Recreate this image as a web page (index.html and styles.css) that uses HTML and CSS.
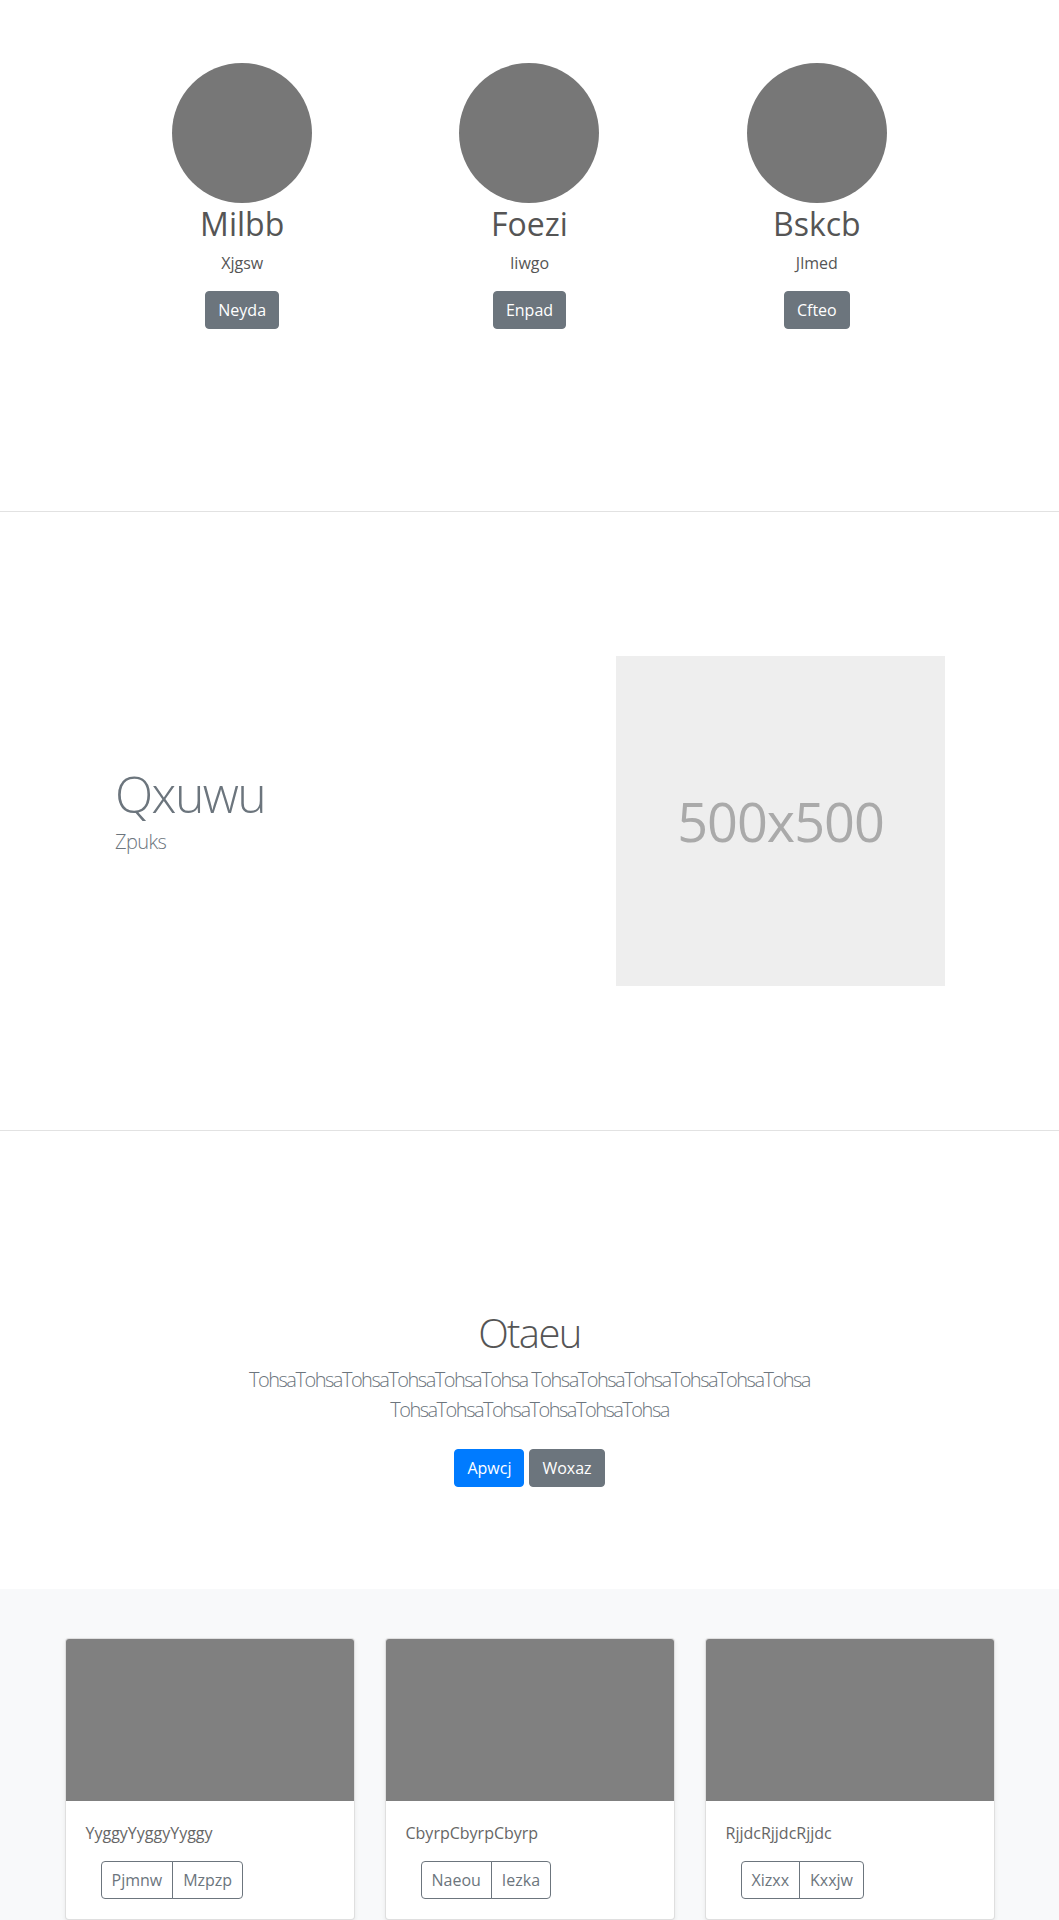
FILE: index.html
```html
<!DOCTYPE html>
<html lang="en">
<head>
<meta charset="utf-8">
<title>Page</title>
<link rel="stylesheet" href="styles.css">
</head>
<body>
<section class="team">
  <div class="team-row">
    <div class="member">
      <div class="avatar"></div>
      <h2 class="member-name">Milbb</h2>
      <p class="member-role">Xjgsw</p>
      <a class="btn btn-secondary">Neyda</a>
    </div>
    <div class="member">
      <div class="avatar"></div>
      <h2 class="member-name">Foezi</h2>
      <p class="member-role">Iiwgo</p>
      <a class="btn btn-secondary">Enpad</a>
    </div>
    <div class="member">
      <div class="avatar"></div>
      <h2 class="member-name">Bskcb</h2>
      <p class="member-role">Jlmed</p>
      <a class="btn btn-secondary">Cfteo</a>
    </div>
  </div>
</section>
<hr class="divider">
<section class="feature">
  <div class="feature-text">
    <h2 class="feature-heading">Qxuwu</h2>
    <p class="lead feature-lead">Zpuks</p>
  </div>
  <div class="placeholder">500x500</div>
</section>
<hr class="divider">
<section class="hero">
  <div class="hero-inner">
    <h1 class="hero-heading">Otaeu</h1>
    <p class="lead hero-lead">TohsaTohsaTohsaTohsaTohsaTohsa TohsaTohsaTohsaTohsaTohsaTohsa TohsaTohsaTohsaTohsaTohsaTohsa</p>
    <p class="hero-actions"><a class="btn btn-primary">Apwcj</a><a class="btn btn-secondary">Woxaz</a></p>
  </div>
</section>
<div class="album">
  <div class="album-grid">
    <div class="card">
      <div class="card-img"></div>
      <div class="card-body">
        <p class="card-text">YyggyYyggyYyggy</p>
        <div class="btn-group"><a class="btn btn-outline">Pjmnw</a><a class="btn btn-outline">Mzpzp</a></div>
      </div>
    </div>
    <div class="card">
      <div class="card-img"></div>
      <div class="card-body">
        <p class="card-text">CbyrpCbyrpCbyrp</p>
        <div class="btn-group"><a class="btn btn-outline">Naeou</a><a class="btn btn-outline">Iezka</a></div>
      </div>
    </div>
    <div class="card">
      <div class="card-img"></div>
      <div class="card-body">
        <p class="card-text">RjjdcRjjdcRjjdc</p>
        <div class="btn-group"><a class="btn btn-outline">Xizxx</a><a class="btn btn-outline">Kxxjw</a></div>
      </div>
    </div>
  </div>
</div>
</body>
</html>
```

FILE: styles.css
```css
* { box-sizing: border-box; }

body {
  margin: 0;
  font-family: "Open Sans", "Noto Sans", sans-serif;
  font-size: 16px;
  line-height: 1.5;
  color: #555;
  background: #fff;
}

h1, h2, p { margin: 0; }

.btn {
  display: inline-block;
  font-size: 16px;
  line-height: 24px;
  padding: 6px 12px;
  border: 1px solid transparent;
  border-radius: 4px;
  text-decoration: none;
  cursor: pointer;
  font-weight: 400;
}

.btn-secondary { background: #6c757d; border-color: #6c757d; color: #fff; }
.btn-primary { background: #007bff; border-color: #007bff; color: #fff; }
.btn-outline { background: transparent; border-color: #6c757d; color: #6c757d; padding: 6px 10px; }

/* team */
.team {
  padding: 63px 0 182px;
}

.team-row {
  width: 862px;
  margin: 0 auto;
  display: flex;
}

.member {
  flex: 1;
  display: flex;
  flex-direction: column;
  align-items: center;
  text-align: center;
}

.avatar {
  width: 140px;
  height: 140px;
  border-radius: 50%;
  background: #777;
  margin-bottom: 2px;
}

.member-name {
  font-size: 32px;
  line-height: 38px;
  font-weight: 400;
  color: #555;
  margin-bottom: 8px;
}

.member-role {
  font-size: 16px;
  color: #555;
  margin-bottom: 16px;
}

.divider {
  margin: 0;
  border: 0;
  border-top: 1px solid #e2e2e2;
  height: 0;
}

/* feature */
.feature {
  height: 618px;
  display: flex;
  align-items: center;
  padding: 0 114px 0 115px;
}

.feature-text { flex: 1; }

.feature-heading {
  font-size: 50px;
  line-height: 1;
  font-weight: 300;
  letter-spacing: -1.6px;
  color: #6c757d;
  margin-bottom: 8px;
}

.lead {
  font-size: 20px;
  line-height: 30px;
  font-weight: 300;
  color: #6c757d;
  margin-bottom: 16px;
}

.feature-lead { letter-spacing: -0.6px; }

.placeholder {
  width: 329px;
  height: 330px;
  background: #eee;
  color: #aaa;
  display: flex;
  align-items: center;
  justify-content: center;
  font-size: 54px;
  letter-spacing: -1px;
}

/* hero */
.hero {
  padding: 178px 0 94px;
  text-align: center;
}

.hero-inner {
  max-width: 640px;
  margin: 0 auto;
  padding: 0 15px;
}

.hero-heading {
  font-size: 40px;
  line-height: 48px;
  font-weight: 300;
  letter-spacing: -1.6px;
  color: #555;
  margin-bottom: 8px;
}

.hero-lead { letter-spacing: -1.5px; }

.hero-actions {
  display: flex;
  justify-content: center;
  gap: 5px;
  margin-bottom: 0;
}

.hero-actions .btn { margin: 8px 0; }

/* album */
.album {
  background: #f8f9fa;
  padding: 49px 0 48px;
}

.album-grid {
  display: grid;
  grid-template-columns: repeat(3, 290px);
  column-gap: 30px;
  justify-content: center;
}

.card {
  background: #fff;
  border: 1px solid rgba(0, 0, 0, 0.125);
  border-radius: 4px;
  box-shadow: 0 2px 4px rgba(0, 0, 0, 0.075);
  overflow: hidden;
  margin-bottom: 24px;
}

.card-img {
  height: 162px;
  background: #808080;
}

.card-body { padding: 20px; }

.card-text {
  color: #666;
  margin-bottom: 16px;
}

.btn-group {
  display: inline-flex;
  margin-left: 15px;
}

.btn-group .btn:first-child {
  border-top-right-radius: 0;
  border-bottom-right-radius: 0;
}

.btn-group .btn + .btn {
  margin-left: -1px;
  border-top-left-radius: 0;
  border-bottom-left-radius: 0;
}
```
